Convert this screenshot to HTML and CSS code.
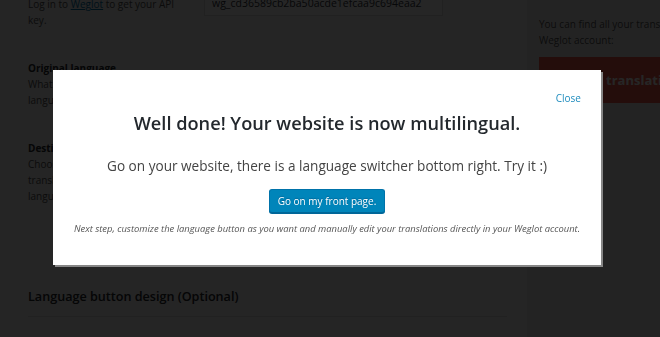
FILE: index.html
```html
<!DOCTYPE html>
<html lang="en">
<head>
    <meta charset="UTF-8">
    <meta name="viewport" content="width=device-width, initial-scale=1.0">
    <title>Weglot Settings</title>
    <link rel="stylesheet" href="styles.css">
</head>
<body>

    <div class="page">
        <div class="main">
            <!-- API key -->
            <div class="form-row">
                <div class="form-label">
                    <div class="label-desc">Log in to <a href="#">Weglot</a> to get your API key.</div>
                </div>
                <div class="form-field">
                    <input type="text" class="text-input" value="wg_cd36589cb2ba50acde1efcaa9c694eaa2">
                </div>
            </div>

            <!-- Original language -->
            <div class="form-row">
                <div class="form-label">
                    <div class="label-title">Original language</div>
                    <div class="label-desc">What is the original (current) language of your website?</div>
                </div>
                <div class="form-field">
                    <div class="select-box"></div>
                </div>
            </div>

            <!-- Destination languages -->
            <div class="form-row">
                <div class="form-label">
                    <div class="label-title">Destination languages</div>
                    <div class="label-desc">Choose languages you want to translate into. Supported languages can be found here.</div>
                </div>
                <div class="form-field">
                    <div class="select-box tall"></div>
                </div>
            </div>

            <h3 class="section-title">Language button design (Optional)</h3>
            <hr class="section-line">

            <div class="form-row">
                <div class="form-label"></div>
                <div class="form-field">
                    <div class="select-box small"></div>
                </div>
            </div>
        </div>

        <div class="sidebar">
            <p class="sidebar-text">You can find all your translations in your Weglot account:</p>
            <a href="#" class="red-button">Edit my translations</a>
        </div>
    </div>

    <!-- Success popup -->
    <div class="overlay">
        <div class="modal">
            <div class="modal-close"><a href="#">Close</a></div>
            <h2 class="modal-title">Well done! Your website is now multilingual.</h2>
            <p class="modal-text">Go on your website, there is a language switcher bottom right. Try it :)</p>
            <div class="modal-action">
                <a href="#" class="button-primary">Go on my front page.</a>
            </div>
            <p class="modal-note">Next step, customize the language button as you want and manually edit your translations directly in your Weglot account.</p>
        </div>
    </div>

</body>
</html>
```

FILE: styles.css
```css
body {
    font-family: 'Segoe UI', 'Open Sans', sans-serif;
    margin: 0;
    padding: 0;
    background-color: #ececec;
    color: #444;
    overflow: hidden;
    height: 337px;
}

/* Page behind the popup (scrolled down a little) */
.page {
    display: flex;
    margin-top: -4px;
    width: 800px;
}

.main {
    width: 527px;
    flex-shrink: 0;
    box-sizing: border-box;
    padding: 0 20px 0 28px;
    background-color: #f3f3f3;
    min-height: 400px;
}

.form-row {
    display: flex;
    margin-bottom: 32px;
}

.form-label {
    width: 176px;
    flex-shrink: 0;
    box-sizing: border-box;
    padding-right: 16px;
    font-size: 10px;
    line-height: 16px;
}

.label-title {
    font-weight: bold;
    color: #23282d;
}

.label-desc {
    color: #555;
}

.label-desc a {
    color: #0073aa;
}

.form-field {
    flex: 1;
}

.text-input {
    display: block;
    width: 239px;
    height: 27px;
    margin-top: -7px;
    box-sizing: border-box;
    padding: 0 7px;
    border: 1px solid #ddd;
    background-color: #fff;
    font-family: inherit;
    font-size: 10.5px;
    color: #32373c;
}

.select-box {
    width: 239px;
    height: 27px;
    margin-top: 12px;
    border: 1px solid #ddd;
    background-color: #fff;
}

.select-box.tall {
    height: 103px;
    margin-top: 10px;
}

.select-box.small {
    width: 100px;
    margin-top: 0;
}

.section-title {
    font-size: 12.6px;
    font-weight: 600;
    line-height: 20px;
    color: #23282d;
    margin: 0;
}

.section-line {
    border: none;
    border-top: 1px solid #dcdcdc;
    margin: 9px 0 20px 0;
}

/* Sidebar */
.sidebar {
    width: 240px;
    flex-shrink: 0;
    box-sizing: border-box;
    padding: 20px 12px 0 12px;
}

.sidebar-text {
    font-size: 10px;
    line-height: 16px;
    color: #555;
    margin: 0;
}

.red-button {
    display: flex;
    align-items: center;
    height: 46px;
    margin-top: 9px;
    padding: 0 15px;
    background-color: #f0584a;
    color: #fff;
    font-size: 13px;
    font-weight: bold;
    text-decoration: none;
    white-space: nowrap;
}

/* Popup */
.overlay {
    position: fixed;
    top: 0;
    left: 0;
    right: 0;
    bottom: 0;
    background-color: rgba(0, 0, 0, 0.85);
}

.modal {
    position: absolute;
    top: 70px;
    left: 53px;
    width: 548px;
    box-sizing: border-box;
    padding: 20px 20px 28px 20px;
    background-color: #fff;
    box-shadow: 2px 2px 0 #868686;
    text-align: center;
}

.modal-close {
    text-align: right;
    font-size: 10px;
    line-height: 16px;
}

.modal-close a {
    color: #1e8cbe;
    text-decoration: none;
}

.modal-title {
    font-size: 18.2px;
    font-weight: 600;
    line-height: 24px;
    color: #23282d;
    margin: 5px 0 0 0;
}

.modal-text {
    font-size: 13.6px;
    line-height: 22px;
    color: #444;
    margin: 20px 0 0 0;
}

.modal-action {
    margin-top: 11px;
    height: 24px;
}

.button-primary {
    display: inline-block;
    height: 24px;
    box-sizing: border-box;
    padding: 0 8px;
    line-height: 22px;
    font-size: 10px;
    color: #fff;
    text-decoration: none;
    background-color: #0085ba;
    border: 1px solid #0073aa;
    border-bottom-color: #006799;
    border-radius: 3px;
    box-shadow: 0 1px 0 #006799;
    text-shadow: 0 -1px 1px #006799;
}

.modal-note {
    font-size: 9.4px;
    font-style: italic;
    line-height: 16px;
    color: #555;
    margin: 9px 0 0 0;
}
```
